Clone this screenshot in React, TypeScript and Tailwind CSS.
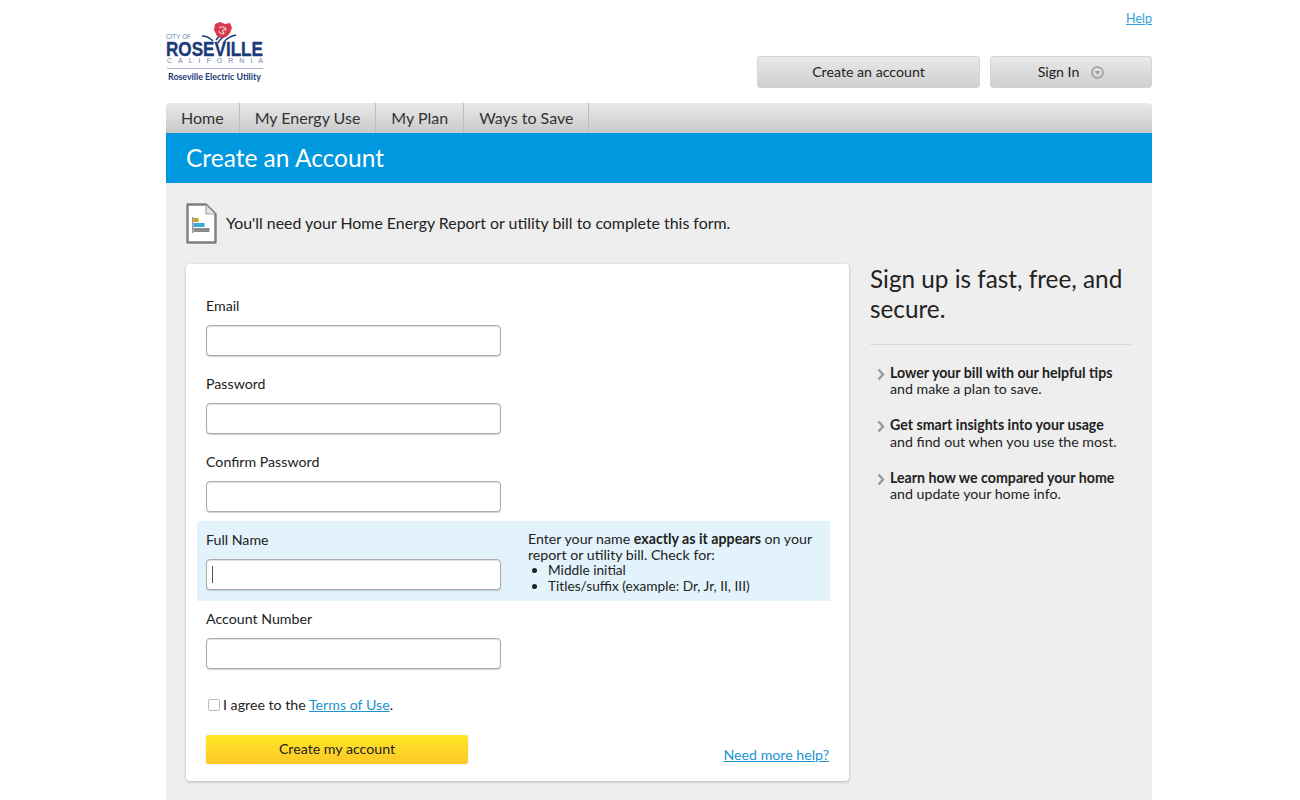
const NAV_ITEMS = ["Home", "My Energy Use", "My Plan", "Ways to Save"];

const BENEFITS = [
  { title: "Lower your bill with our helpful tips", text: "and make a plan to save." },
  { title: "Get smart insights into your usage", text: "and find out when you use the most." },
  { title: "Learn how we compared your home", text: "and update your home info." },
];

function Logo() {
  return (
    <svg width="100" height="64" viewBox="0 0 100 64" className="block overflow-visible">
      <path d="M50 18 C53 15 55 12 56 8 M58 20 C61 16 65 14 70 13 M47 19 C44 16 41 14 36 14 M52 21 C54 17 58 14 62 12" fill="none" stroke="#1b3a78" strokeWidth="1.4" />
      <path d="M49 2 L54 0 L59 2 L64 1 L66 6 L64 11 L60 15 L55 16 L51 14 L48 8 Z" fill="#d8394f" />
      <path d="M53 6 C56 4 60 5 60 8 C57 7 55 9 58 11 C56 13 53 11 53 9" fill="none" stroke="#f5c6c8" strokeWidth="1.2" />
      <text x="0" y="17" fontFamily="Liberation Sans" fontSize="7" fill="#6f86ad" textLength="25" lengthAdjust="spacingAndGlyphs">CITY OF</text>
      <text x="0" y="34" fontFamily="Liberation Sans" fontSize="21" fontWeight="700" fill="#1b3a78" stroke="#1b3a78" strokeWidth="0.4" textLength="97" lengthAdjust="spacingAndGlyphs">ROSEVILLE</text>
      <text x="1" y="41" fontFamily="Liberation Sans" fontSize="7" fill="#6f86ad" textLength="96" lengthAdjust="spacing">CALIFORNIA</text>
      <rect x="1" y="46" width="96" height="1" fill="#a9b8d0" />
      <text x="2" y="58" fontFamily="Lato" fontSize="10" fontWeight="700" fill="#1b3a78" textLength="93" lengthAdjust="spacingAndGlyphs">Roseville Electric Utility</text>
    </svg>
  );
}

function ReportIcon() {
  return (
    <svg width="31" height="41" viewBox="0 0 31 41" className="block shrink-0">
      <path d="M1.5 1.5 H20 L29.5 11 V39.5 H1.5 Z" fill="#fff" stroke="#7f7f7f" strokeWidth="2.4" strokeLinejoin="round" />
      <path d="M20 2 V11 H29" fill="#e4e4e4" stroke="#a5a5a5" strokeWidth="1.2" />
      <rect x="6" y="14" width="1.5" height="16" fill="#999" />
      <rect x="7.5" y="15" width="5" height="4" fill="#c9a227" />
      <rect x="7.5" y="20" width="11" height="4" fill="#3fa9dc" />
      <rect x="7.5" y="25" width="16" height="4" fill="#8c8c8c" />
    </svg>
  );
}

function Field({ label, caret }: { label: string; caret?: boolean }) {
  return (
    <div className="w-[295px]">
      <div className="h-[20px] text-[14.2px] leading-[20px] text-[#222]">{label}</div>
      <div className="relative mt-[9px] h-[31px] rounded-[4px] border border-[#adadad] bg-white shadow-[inset_0_1px_1px_rgba(0,0,0,0.12),0_1px_1px_rgba(0,0,0,0.18)]">
        {caret && <span className="absolute left-[5px] top-[6px] h-[17px] w-px bg-[#555]" />}
      </div>
    </div>
  );
}

export default function App() {
  return (
    <div className="h-[800px] overflow-hidden bg-white font-['Lato',sans-serif] text-[#222]">
      <div className="ml-[166px] w-[986px]">
        <header className="flex h-[103px] items-start justify-between">
          <div className="pt-[22px]">
            <Logo />
          </div>
          <div className="flex flex-col items-end">
            <a href="#" className="mt-[11px] h-[16px] text-[12.5px] leading-[16px] text-[#2a9fdc] underline">
              Help
            </a>
            <div className="mt-[29px] flex gap-[10px]">
              <button className="h-[32px] w-[223px] rounded-[3px] border border-[#d4d4d4] bg-gradient-to-b from-[#e9e9e9] to-[#cfcfcf] text-[14.2px] text-[#222]">
                Create an account
              </button>
              <button className="flex h-[32px] w-[162px] items-center justify-center gap-[12px] rounded-[3px] border border-[#d4d4d4] bg-gradient-to-b from-[#e9e9e9] to-[#cfcfcf] text-[14.2px] text-[#222]">
                Sign In
                <svg width="13" height="13" viewBox="0 0 13 13">
                  <circle cx="6.5" cy="6.5" r="5.5" fill="none" stroke="#999" strokeWidth="1.4" />
                  <path d="M3.8 5 H9.2 L6.5 8.8 Z" fill="#999" />
                </svg>
              </button>
            </div>
          </div>
        </header>

        <nav className="flex h-[30px] rounded-t-[4px] bg-gradient-to-b from-[#eaeaea] to-[#c9c9c9]">
          {NAV_ITEMS.map((item) => (
            <a key={item} href="#" className="border-r border-[#bdbdbd] px-[15px] text-[16px] leading-[30px] text-[#333]">
              {item}
            </a>
          ))}
        </nav>

        <div className="flex h-[50px] items-center bg-[#0098de] pl-[20px] pt-[1px] text-[24.5px] text-white">
          Create an Account
        </div>

        <main className="bg-[#eeeeee] px-[20px] pb-[40px]">
          <div className="flex h-[81px] items-center gap-[9px]">
            <ReportIcon />
            <p className="pb-[2px] text-[15.9px] text-[#222]">You'll need your Home Energy Report or utility bill to complete this form.</p>
          </div>

          <div className="flex items-start">
            <section className="h-[517px] w-[663px] rounded-[4px] bg-white px-[20px] pt-[32px] shadow-[0_1px_3px_rgba(0,0,0,0.25)]">
              <div className="flex flex-col gap-[18px]">
                <Field label="Email" />
                <Field label="Password" />
                <Field label="Confirm Password" />
              </div>

              <div className="-mx-[9px] mt-[9px] flex h-[80px] w-[633px] bg-[#e2f3fb] pl-[9px] pt-[9px]">
                <Field label="Full Name" caret />
                <div className="ml-[27px] mt-[1px] w-[300px] text-[14.2px] leading-[15.5px]">
                  <p>
                    Enter your name <b>exactly as it appears</b> on your report or utility bill. Check for:
                  </p>
                  <ul className="ml-[20px] list-outside list-disc text-[13.7px]">
                    <li>Middle initial</li>
                    <li>Titles/suffix (example: Dr, Jr, II, III)</li>
                  </ul>
                </div>
              </div>

              <div className="mt-[8px]">
                <Field label="Account Number" />
              </div>

              <label className="mt-[26px] flex items-center gap-[3px] text-[14.2px] leading-[20px]">
                <input type="checkbox" className="ml-[2px] h-[12px] w-[12px] appearance-none rounded-[2px] border border-[#bbb] bg-white" />
                <span>
                  I agree to the{" "}
                  <a href="#" className="text-[#1c94d2] underline">
                    Terms of Use
                  </a>
                  .
                </span>
              </label>

              <div className="mt-[20px] flex items-end justify-between">
                <button className="h-[29px] w-[262px] rounded-[3px] bg-gradient-to-b from-[#ffe826] to-[#fdc727] pb-[2px] text-[14.2px] text-[#222] shadow-[0_0_1px_rgba(0,0,0,0.4)]">
                  Create my account
                </button>
                <a href="#" className="-mb-px block text-[14.2px] leading-[20px] text-[#1c94d2] underline">
                  Need more help?
                </a>
              </div>
            </section>

            <aside className="ml-[21px] w-[261px]">
              <h2 className="border-b border-[#d9d9d9] pb-[20px] text-[24.3px] leading-[30px] text-[#222]">
                Sign up is fast, free, and secure.
              </h2>
              <ul className="mt-[20px] flex flex-col gap-[20px] text-[14.2px] leading-[16.2px]">
                {BENEFITS.map((b) => (
                  <li key={b.title} className="flex">
                    <svg width="8" height="13" viewBox="0 0 8 13" className="ml-[7px] mr-[5px] mt-[3px] shrink-0">
                      <path d="M1.5 1.5 L6 6.5 L1.5 11.5" fill="none" stroke="#999" strokeWidth="2.4" />
                    </svg>
                    <div>
                      <div className="font-bold">{b.title}</div>
                      <div>{b.text}</div>
                    </div>
                  </li>
                ))}
              </ul>
            </aside>
          </div>
        </main>
      </div>
    </div>
  );
}
